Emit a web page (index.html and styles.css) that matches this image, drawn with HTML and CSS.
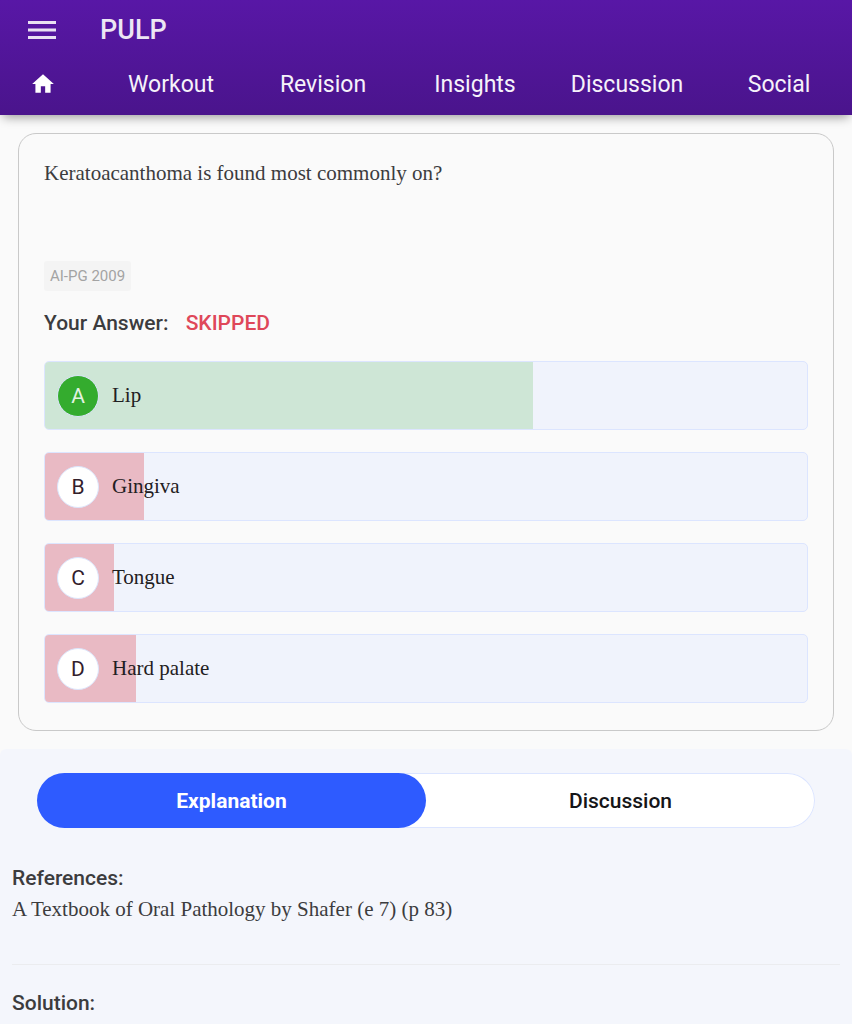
FILE: index.html
```html
<!DOCTYPE html>
<html lang="en">
<head>
  <meta charset="UTF-8" />
  <meta name="viewport" content="width=device-width, initial-scale=1.0" />
  <title>Pulp</title>
  <link rel="stylesheet" href="styles.css">
</head>
<body>
  <header class="header">
    <div class="toolbar">
      <button class="menu-btn" type="button" aria-label="Menu">
        <svg width="28" height="20" viewBox="0 0 28 20">
          <path d="M0 2.500h28M0 10h28M0 17.500h28" stroke="#e9e1f2" stroke-width="3" />
        </svg>
      </button>
      <h1 class="title">PULP</h1>
    </div>
    <nav class="nav">
      <a class="home" href="#" aria-label="Home">
        <svg width="26" height="26" viewBox="0 0 24 24">
          <path d="M10 20v-6h4v6h5v-8h3L12 3 2 12h3v8z" fill="#fff" />
        </svg>
      </a>
      <a href="#">Workout</a>
      <a href="#">Revision</a>
      <a href="#">Insights</a>
      <a href="#">Discussion</a>
      <a href="#">Social</a>
    </nav>
  </header>

  <main>
    <section class="card">
      <p class="question">Keratoacanthoma is found most commonly on?</p>
      <span class="tag">AI-PG 2009</span>
      <p class="answer">Your Answer: <span class="skipped">SKIPPED</span></p>

      <ul class="options">
        <li class="option correct">
          <div class="bar" style="width: 64%"></div>
          <span class="letter">A</span>
          <span class="text">Lip</span>
        </li>
        <li class="option">
          <div class="bar" style="width: 13%"></div>
          <span class="letter">B</span>
          <span class="text">Gingiva</span>
        </li>
        <li class="option">
          <div class="bar" style="width: 9%"></div>
          <span class="letter">C</span>
          <span class="text">Tongue</span>
        </li>
        <li class="option">
          <div class="bar" style="width: 12%"></div>
          <span class="letter">D</span>
          <span class="text">Hard palate</span>
        </li>
      </ul>
    </section>

    <section class="panel">
      <div class="tabs">
        <button class="tab active" type="button">Explanation</button>
        <button class="tab" type="button">Discussion</button>
      </div>
      <div class="block">
        <h2>References:</h2>
        <p>A Textbook of Oral Pathology by Shafer (e 7) (p 83)</p>
      </div>
      <div class="block">
        <h2>Solution:</h2>
      </div>
    </section>
  </main>
</body>
</html>
```
FILE: styles.css
```css
* {
  box-sizing: border-box;
}
body {
  margin: 0;
  min-height: 100vh;
  display: flex;
  flex-direction: column;
  background-color: #fafafa;
  font-family: Roboto, sans-serif;
  font-size: 21px;
  color: #3c3c3e;
}
h1, h2, p, ul {
  margin: 0;
  padding: 0;
}

/* header */
.header {
  height: 115px;
  background: linear-gradient(#5817a6, #4a148c);
  box-shadow: 0 5px 10px -3px rgba(0, 0, 0, 0.4);
}
.toolbar {
  display: flex;
  align-items: center;
  height: 60px;
  padding-left: 28px;
  gap: 44px;
}
.menu-btn {
  display: flex;
  padding: 0;
  border: 0;
  background: none;
}
.title {
  font-size: 27px;
  font-weight: 500;
  color: #ece6f3;
}
.nav {
  display: grid;
  grid-template-columns: 95px repeat(5, 1fr);
  align-items: center;
  height: 48px;
  margin-right: -3px;
}
.nav a {
  color: #f6f2fa;
  font-size: 23px;
  text-align: center;
  text-decoration: none;
}
.nav .home {
  display: flex;
  padding-left: 30px;
}

/* question */
main {
  display: flex;
  flex-direction: column;
  flex: 1;
}
.card {
  margin: 18px;
  padding: 25px 25px 27px;
  border: 1px solid #c9c9c9;
  border-radius: 18px;
}
.question {
  margin-bottom: 74px;
  font-family: "Liberation Serif", serif;
  line-height: 28px;
}
.tag {
  display: inline-block;
  padding: 0 6px;
  border-radius: 3px;
  background-color: #f4f4f4;
  color: #a3a3a3;
  font-size: 15px;
  line-height: 30px;
}
.answer {
  margin: 18px 0 24px;
  font-weight: 500;
  line-height: 28px;
}
.skipped {
  margin-left: 12px;
  color: #df4759;
}
.options {
  display: flex;
  flex-direction: column;
  gap: 22px;
  list-style: none;
}
.option {
  position: relative;
  display: flex;
  align-items: center;
  gap: 13px;
  height: 69px;
  padding-left: 12px;
  border: 1px solid #dce5ff;
  border-radius: 5px;
  background-color: #f0f3fc;
  overflow: hidden;
}
.bar {
  position: absolute;
  top: 0;
  bottom: 0;
  left: 0;
  background-color: #e9bac4;
}
.correct .bar {
  background-color: #cee6d6;
}
.letter {
  position: relative;
  width: 42px;
  height: 42px;
  border: 1px solid #dce5fb;
  border-radius: 50%;
  background-color: #fff;
  color: #33202b;
  line-height: 40px;
  text-align: center;
}
.correct .letter {
  background-color: #34ac2e;
  color: #e3f3e2;
}
.text {
  position: relative;
  font-family: "Liberation Serif", serif;
  color: #1f2022;
}

/* explanation */
.panel {
  flex: 1;
  padding: 24px 12px 6px;
  border-radius: 6px 6px 0 0;
  background-color: #f4f6fc;
}
.tabs {
  display: flex;
  height: 55px;
  margin: 0 25px 36px;
  border-radius: 28px;
  background-color: #fff;
  box-shadow: inset 0 0 0 1px #dce5ff;
}
.tab {
  flex: 1;
  border: 0;
  border-radius: 28px;
  background: none;
  color: #151517;
  font-family: inherit;
  font-size: 21px;
  font-weight: 500;
}
.tab.active {
  background-color: #2e5bff;
  color: #fff;
  font-weight: 700;
}
.block + .block {
  margin-top: 41px;
  padding-top: 24px;
  border-top: 1px solid #ebecef;
}
.block h2 {
  font-size: 21px;
  font-weight: 500;
  line-height: 28px;
}
.block p {
  padding-top: 3px;
  font-family: "Liberation Serif", serif;
  line-height: 28px;
}
```
